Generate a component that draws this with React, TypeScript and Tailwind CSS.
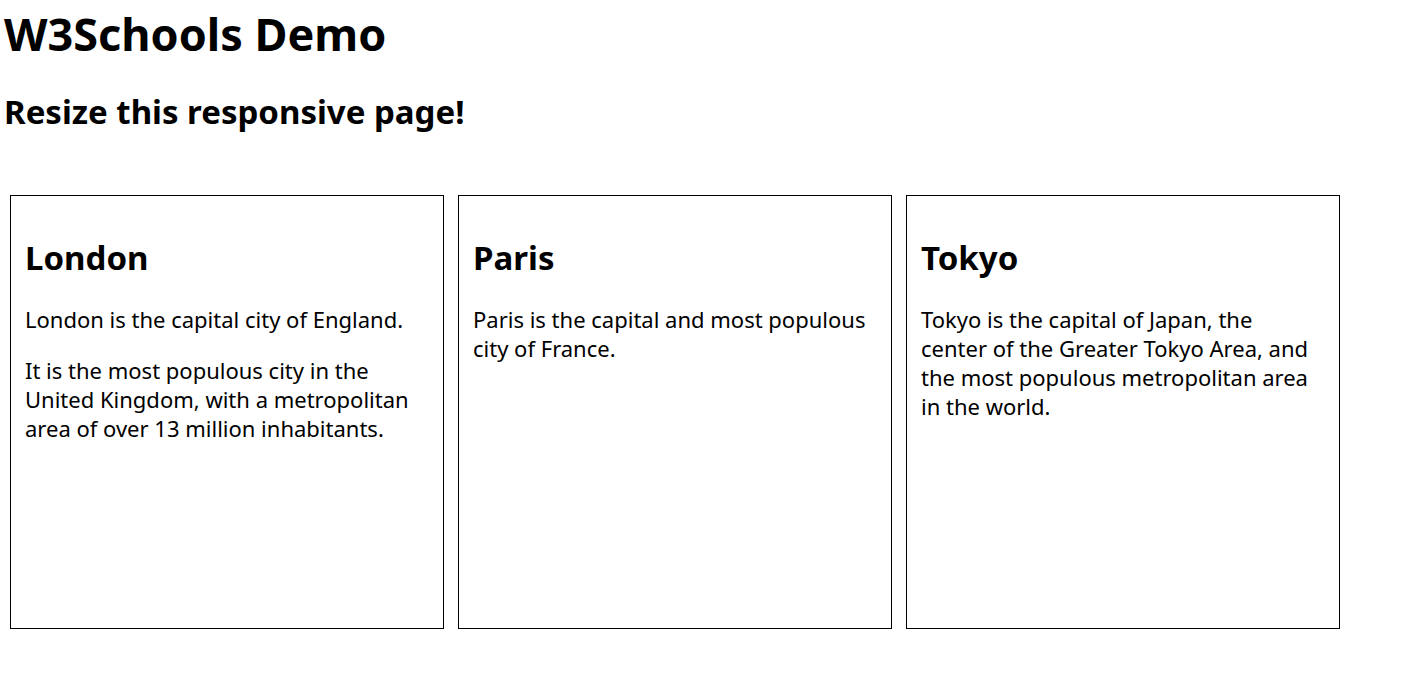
export default function App() {
  const cities = [
    {
      name: "London",
      text: [
        "London is the capital city of England.",
        "It is the most populous city in the United Kingdom, with a metropolitan area of over 13 million inhabitants.",
      ],
    },
    {
      name: "Paris",
      text: ["Paris is the capital and most populous city of France."],
    },
    {
      name: "Tokyo",
      text: [
        "Tokyo is the capital of Japan, the center of the Greater Tokyo Area, and the most populous metropolitan area in the world.",
      ],
    },
  ];

  return (
    <div className="min-h-screen bg-white text-black font-['Noto_Sans',sans-serif]">
      <h1 className="px-1 pt-[5px] text-[45px] font-bold leading-[57px]">W3Schools Demo</h1>
      <h2 className="px-1 mt-[29px] text-[33px] font-bold leading-[42px]">Resize this responsive page!</h2>
      <div className="flex gap-[14px] pl-[10px] mt-[62px]">
        {cities.map((c) => (
          <div key={c.name} className="w-[434px] h-[434px] border border-black pl-[14px] pr-[20px]">
            <h2 className="mt-[41px] text-[33px] font-bold leading-[42px]">{c.name}</h2>
            {c.text.map((t, i) => (
              <p key={i} className={(i === 0 ? "mt-[26px]" : "mt-[22px]") + " text-[22px] leading-[29px]"}>
                {t}
              </p>
            ))}
          </div>
        ))}
      </div>
    </div>
  );
}
